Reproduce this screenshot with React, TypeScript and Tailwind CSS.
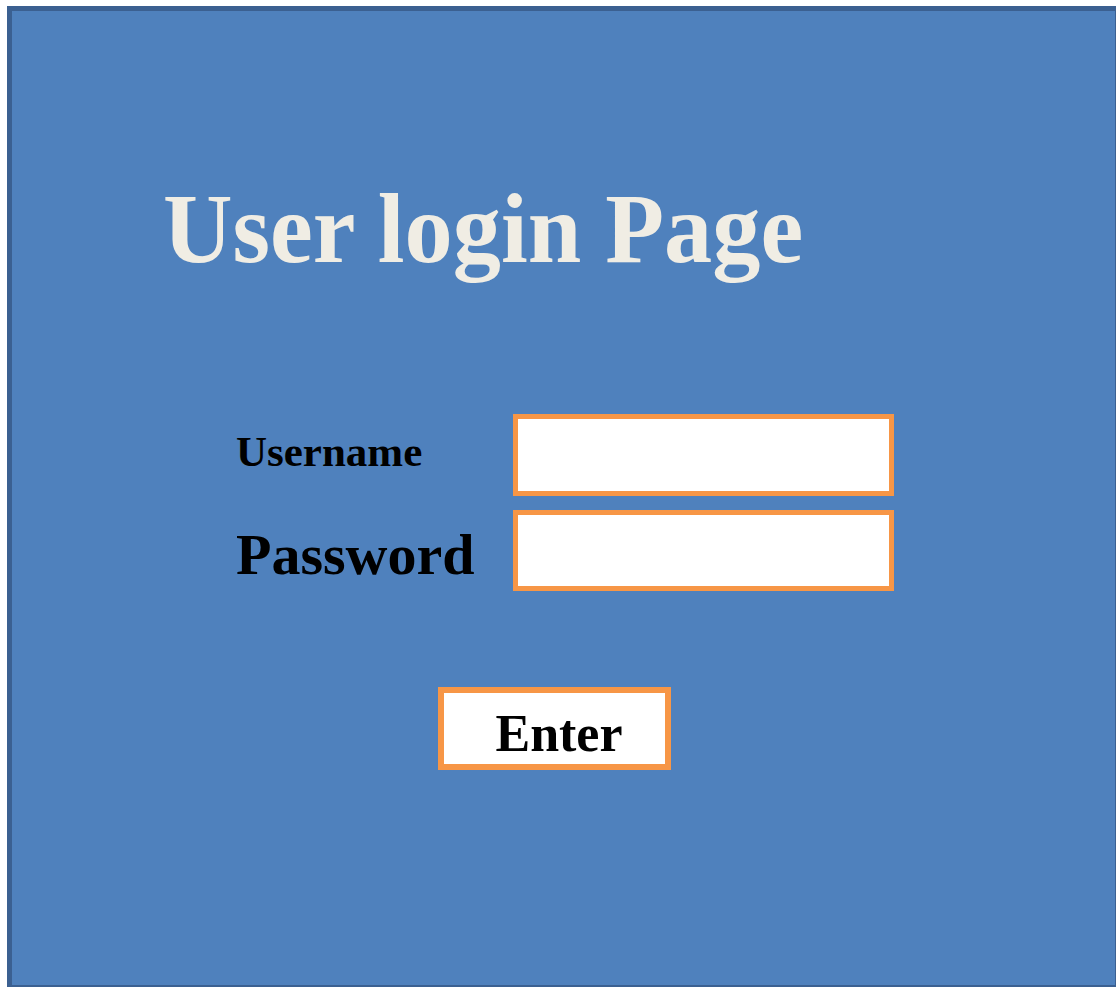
import { useState } from "react";

export default function App() {
    const [username, setUsername] = useState("");
    const [password, setPassword] = useState("");

    return (
        <div className="min-h-screen bg-white pt-[6px] pl-[7px] font-['Liberation_Serif','Times_New_Roman',serif]">
            <div className="w-[1109px] h-[981px] bg-[#4f81bd] border-t-[5px] border-l-[5px] border-r border-b-2 border-[#3b6091]">
                {/* heading */}
                <div className="pt-[168px] pl-[151px]">
                    <h1 className="inline-block origin-left scale-x-[0.963] text-[100px] leading-none font-bold text-[#f0ede4] whitespace-nowrap">
                        User login Page
                    </h1>
                </div>

                {/* credentials */}
                <form
                    className="mt-[135px] pl-[224px] flex flex-col gap-[14px]"
                    onSubmit={(e) => e.preventDefault()}
                >
                    <div className="flex items-start">
                        <label
                            htmlFor="username"
                            className="w-[277px] mt-[16px] text-[43px] leading-none font-bold text-black"
                        >
                            Username
                        </label>
                        <input
                            id="username"
                            type="text"
                            value={username}
                            onChange={(e) => setUsername(e.target.value)}
                            className="w-[381px] h-[82px] bg-white border-[5px] border-[#f79646] outline-none px-3 text-3xl"
                        />
                    </div>
                    <div className="flex items-start">
                        <label
                            htmlFor="password"
                            className="w-[277px] mt-[16px] text-[58px] leading-none font-bold text-black"
                        >
                            Password
                        </label>
                        <input
                            id="password"
                            type="password"
                            value={password}
                            onChange={(e) => setPassword(e.target.value)}
                            className="w-[381px] h-[81px] bg-white border-[5px] border-[#f79646] outline-none px-3 text-3xl"
                        />
                    </div>

                    <div className="mt-[82px] pl-[202px]">
                        <button
                            type="submit"
                            className="w-[233px] h-[83px] bg-white border-[6px] border-[#f79646] flex items-start justify-center pt-[15px] pl-[9px] text-[52px] leading-none font-bold text-black"
                        >
                            Enter
                        </button>
                    </div>
                </form>
            </div>
        </div>
    );
}
